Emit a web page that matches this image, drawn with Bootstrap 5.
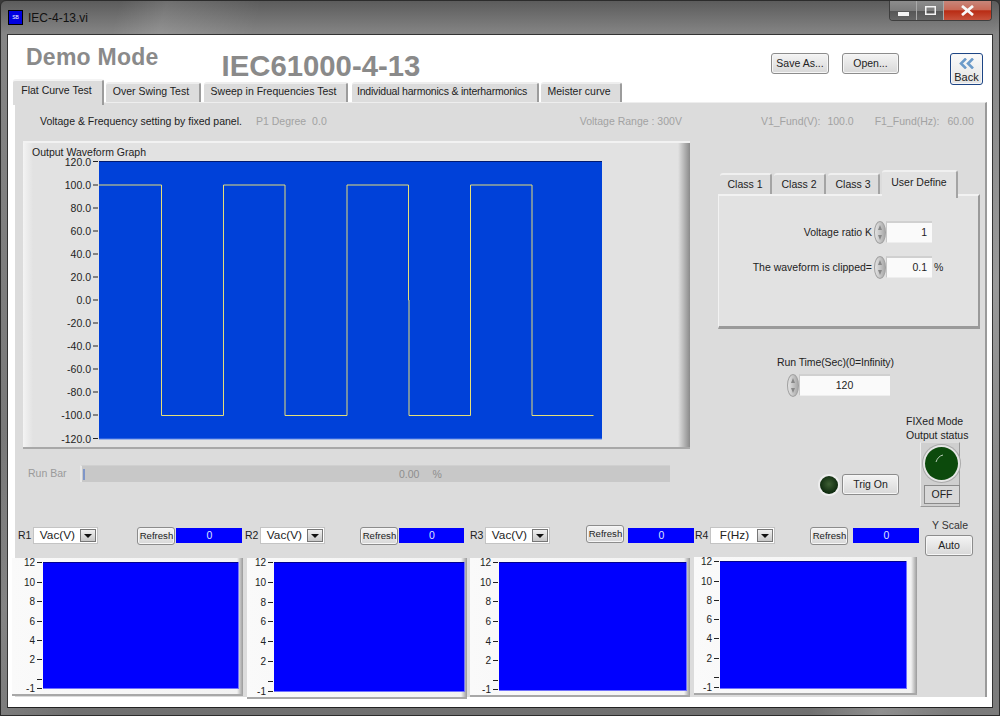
<!DOCTYPE html>
<html lang="en">
<head>
<meta charset="utf-8">
<title>IEC-4-13.vi</title>
<link href="https://cdn.jsdelivr.net/npm/bootstrap@5.3.0/dist/css/bootstrap.min.css" rel="stylesheet">
<style>
html,body{margin:0;height:716px;overflow:hidden;background:#3a3a3a}
body,.btn,svg text{font-family:"Liberation Sans",Arial,sans-serif;font-size:10.5px;color:#222}
svg{display:block}
svg text{fill:#222}
.win{width:1000px;height:716px;border:1px solid #2c2c2c;border-radius:6px 6px 0 0;overflow:hidden;
 background:linear-gradient(105deg,rgba(255,255,255,0) 10%,rgba(255,255,255,.12) 14%,rgba(255,255,255,0) 22%,rgba(255,255,255,0) 84%,rgba(255,255,255,.22) 90%,rgba(255,255,255,.08) 96%),linear-gradient(#5c5c5c,#858585 33px,#707070)}
.titlebar{height:33px;padding-left:7px;flex:none}
.titlebar .ico{width:15px;height:15px;margin-top:9px;background:#0000e0;border:1px solid #000;color:#fff;font-size:5px;line-height:13px;text-align:center;overflow:hidden}
.titlebar .ttl{font-size:12px;margin:10px 0 0 5px;color:#111;line-height:15px}
.caps{width:103px;height:20px;margin-right:7px;border:1px solid #3e3e3e;border-top:0;border-radius:0 0 4px 4px;overflow:hidden}
.caps div{height:100%;display:flex;align-items:center;justify-content:center;background:linear-gradient(#8c8c8c,#7c7c7c 50%,#565656 52%,#666);border-right:1px solid #aaa}
.caps .c1{width:27px;align-items:flex-end;padding-bottom:4px}.caps .c2{width:27px}
.caps .c3{flex:1;border:0;background:linear-gradient(#c8867a,#c86a58 45%,#b92c14 52%,#c8523c)}
.client{margin:0 6px 7px 6px;background:#fff;border:1px solid #333;border-bottom-color:#222;flex:1;min-height:0}
.top{height:44px;flex:none}
.brand{font-weight:700;color:#8a8a8a;margin:0;line-height:1}
.b1{font-size:23px;margin:11px 0 0 18px;letter-spacing:.25px}
.b2{font-size:29.3px;margin:16px 0 0 63px}
.ptabs{position:relative;z-index:2;margin:0 0 0 5px;height:26px;flex-wrap:nowrap}
.tb{color:#222;text-decoration:none}
.ptabs .tb{height:20px;margin-top:3px;margin-right:2px;border:0;border-right:2px solid #9c9c9c;border-top:2px solid #eee;border-radius:3px 3px 0 0;background:#dcdcdc;white-space:nowrap;display:flex;align-items:center;justify-content:center;padding:0 3px 2px 0}
.ptabs .act{height:26px;margin-top:0;border-top-color:#f4f4f4;align-items:flex-start;padding:2px 2px 0 0}
.ptabs .tight{letter-spacing:-.2px;padding-right:5px}
.lv-btn{--bs-btn-padding-x:0;--bs-btn-padding-y:0;--bs-btn-font-size:10.5px;--bs-btn-border-radius:3px;background:linear-gradient(#f4f4f4,#d8d8d8);border:1px solid #8c8c8c;color:#222;line-height:1;box-shadow:inset 0 0 0 1px #f6f6f6}
.btn-save{width:58px;height:21px;margin:18px 13px 0 0;padding-bottom:1px}
.btn-open{width:57px;height:21px;margin:18px 51px 0 0;padding-bottom:1px}
.btn-back{width:33px;height:32px;margin:18px 9px 0 0;border:1px solid #1d4585;background:linear-gradient(#fafafa,#e4e4e4);display:flex;flex-direction:column;align-items:center;justify-content:flex-start;padding-top:4px;gap:3px;font-size:11px}
.panel{height:595px;margin:-3px 0 0 7px;width:972px;background:#dcdcdc;border-right:2px solid #9a9a9a;border-top:1px solid #eee;flex:none;position:relative}
.info{height:38px;flex:none;color:#a2a2a2;white-space:nowrap;padding-top:12px;line-height:13px}
.info .dk{color:#222;margin-left:25px;width:216px}
.main{height:366px;flex:none}
.leftc{width:675px;padding-left:8px;flex:none}
.wgraph{width:667px;height:308px;background:linear-gradient(90deg,#f4f4f4,#e2e2e2 10px,#e2e2e2 655px,#8a8a8a);border-top:2px solid #f2f2f2;border-bottom:2px solid #a8a8a8}
.wgraph svg{margin-top:-2px}
.runbar{margin-top:16px;height:17px;color:#9a9a9a;line-height:17px}
.runbar .lbl{width:57px;padding-left:5px}
.track{width:590px;height:17px;background:#c8c8c8;border-left:2px solid #e8e8e8;border-top:1px solid #d0d0d0;color:#8e8e8e;position:relative}
.track .tick{width:2px;height:11px;margin:3px 0 0 1px;background:#7f96c8}
.track .v{margin-left:314px}.track .p{margin-left:13px}
.rightc{width:262px;margin-left:28px;flex:none}
.ctabs{height:27px;margin:29px 0 0 2px;position:relative;z-index:1;flex-wrap:nowrap}
.ctabs .tb{height:21px;width:52px;margin:3px 2px 0 0;border-top:2px solid #f0f0f0;border-right:2px solid #a4a4a4;background:#dcdcdc;border-radius:3px 3px 0 0;display:flex;align-items:center;justify-content:center}
.ctabs .act{width:76px;height:28px;margin:0;background:#e2e2e2;align-items:flex-start;padding-top:3px}
.cbox{height:135px;margin-top:-3px;background:#e2e2e2;border-top:2px solid #f2f2f2;border-left:1px solid #f2f2f2;border-right:2px solid #9a9a9a;border-bottom:3px solid #9a9a9a;padding-top:25px}
.cbox .r{height:24px;margin-bottom:11px}
.cbox .lab{width:155px;text-align:right;padding-right:2px}
.spin{width:12px;height:23px;flex:none;border-radius:50%;background:linear-gradient(90deg,#e4e4e4,#a8a8a8);border:1px solid #a0a0a0;display:flex;align-items:center;justify-content:center}
.num{height:22px;background:#fafafa;border-top:2px solid #d0d0d0;border-left:1px solid #c8c8c8;border-bottom:1px solid #eee;color:#222;line-height:19px;flex:none}
.n1{width:46px;text-align:right;padding-right:5px}
.rt{margin-top:27px;text-align:center;width:235px}
.rt .t{line-height:13px;margin-bottom:5px;letter-spacing:-.1px}
.rt .f{padding-left:5px}
.n2{width:91px;text-align:center}
.low{margin-top:18px;height:92px;padding-left:102px}
.led{width:18px;height:18px;border-radius:50%;margin:61px 4px 0 0;flex:none;background:radial-gradient(circle at 50% 45%,#3e5f34,#0e2a0e 70%);box-shadow:0 0 0 2px #eee}
.trig{width:57px;height:21px;margin-top:59px;flex:none}
.fx{margin-left:7px;width:70px;line-height:13.5px;color:#222;white-space:nowrap}
.fxbox{width:40px;height:65px;margin-left:14px;background:#cfcfcf;border:1px solid #999;border-left-color:#eee;border-top-color:#ddd;padding:4px 0 0 3px}
.knob{width:33px;height:33px;border-radius:50%;background:#0c4a0c;box-shadow:0 0 0 2px #e6e6e6,0 0 0 3px #aaa;margin-left:1px}
.off{width:36px;height:19px;margin-top:5px;border:1px solid #8a8a8a;background:#d8d8d8;text-align:center;line-height:17px}
.ctrls{margin-left:3px;height:33px}
.grp{flex:none;height:20px;padding-top:2px}
.g1{width:227px}.g2{width:225px}.g3{width:225px}.g4{width:225px}
.sel{width:65px;height:17px;margin-left:2px;background:#fff;border:1px solid #c4c4c4;flex:none;display:flex;align-items:center;line-height:15px}
.sel span{flex:1;text-align:center;font-size:11.8px}
.sel i{width:16px;height:13px;margin-right:1px;background:linear-gradient(#f0f0f0,#c8c8c8);border:1px solid #777;display:flex;align-items:center;justify-content:center}
.sel i:after{content:"";border:4px solid transparent;border-top-color:#111;border-bottom:0}
.rf{width:38px;height:18px;flex:none;font-size:9.6px;--bs-btn-font-size:9.6px}
.blue{height:15px;width:66px;margin-top:1px;background:#0000ff;color:#dfe4ff;text-align:center;line-height:15px;flex:none}
.ys{width:50px;margin:-8px 0 0 5px;text-align:center;color:#333;font-size:10.5px;line-height:13px;padding-top:2px}
.ys .btn{width:48px;height:21px;margin-top:3px;display:block}
.plots{margin-left:-3px;gap:0}
.pl{background:linear-gradient(90deg,#fafafa,#f2f2f2 calc(100% - 6px),#9a9a9a);border-bottom:2px solid #a8a8a8;flex:none}
.pl svg text{font-size:10px}
</style>
</head>
<body>
<div class="win d-flex flex-column">
  <div class="titlebar d-flex">
    <div class="ico">SB</div>
    <div class="ttl">IEC-4-13.vi</div>
    <div class="caps d-flex ms-auto">
      <div class="c1"><svg width="11" height="5"><rect x="0" y="1" width="11" height="4" fill="#f4f4f4"/></svg></div>
      <div class="c2"><svg width="11" height="9"><rect x=".75" y=".75" width="9.5" height="7.5" fill="none" stroke="#f4f4f4" stroke-width="1.5"/></svg></div>
      <div class="c3"><svg width="15" height="11"><path d="M2 1 L13 10 M13 1 L2 10" stroke="#f8f8f8" stroke-width="2.8"/></svg></div>
    </div>
  </div>
  <div class="client d-flex flex-column">
    <div class="top d-flex">
      <h1 class="brand b1">Demo Mode</h1>
      <h1 class="brand b2">IEC61000-4-13</h1>
      <div class="d-flex ms-auto">
        <button class="btn lv-btn btn-save">Save As...</button>
        <button class="btn lv-btn btn-open">Open...</button>
        <button class="btn lv-btn btn-back"><svg width="16" height="11" viewBox="0 0 16 11"><path d="M7 0.5 L2 5.5 L7 10.5 M14 0.5 L9 5.5 L14 10.5" fill="none" stroke="#6b9ac9" stroke-width="2.6"/></svg><span>Back</span></button>
      </div>
    </div>
    <nav class="nav ptabs">
      <a class="tb act" style="width:91px">Flat Curve Test</a>
      <a class="tb" style="width:95px">Over Swing Test</a>
      <a class="tb" style="width:144px;margin-left:1px">Sweep in Frequencies Test</a>
      <a class="tb tight" style="width:187px;margin-left:2px">Individual harmonics &amp; interharmonics</a>
      <a class="tb" style="width:81px">Meister curve</a>
    </nav>
    <div class="panel d-flex flex-column">
      <div class="info d-flex">
        <span class="dk">Voltage &amp; Frequency setting by fixed panel.</span>
        <span>P1 Degree</span><span style="margin-left:3px">&nbsp;0.0</span>
        <span style="margin-left:253px">Voltage Range : 300V</span>
        <span style="margin-left:79px">V1_Fund(V):</span><span style="margin-left:7px">100.0</span>
        <span style="margin-left:21px">F1_Fund(Hz):</span><span style="margin-left:8px">60.00</span>
      </div>
      <div class="main d-flex">
        <div class="leftc">
          <div class="wgraph">
            <svg width="667" height="308" viewBox="0 0 667 308">
              <text x="9" y="15">Output Waveform Graph</text>
              <rect x="76" y="20.5" width="503" height="277.5" fill="#0041d9"/>
              <path d="M76 20.5H579" stroke="#001a70"/>
              <path d="M76 298H579" stroke="#5c86e8"/>
              <path d="M76 44H138.5V274.5H200.5V44H262V274.5H324V44H385.5V159H386V274.5H447.5V44H509V274.5H570.5" fill="none" stroke="#e6df78"/>
              <g stroke="#222" stroke-width="1">
                <path d="M70 20.5h5M70 44h5M70 67h5M70 90h5M70 113h5M70 136h5M70 159h5M70 182h5M70 205h5M70 228h5M70 251h5M70 274h5M70 297.5h5"/>
              </g>
              <g text-anchor="end" style="font-size:10.5px">
                <text x="68" y="24.5">120.0</text><text x="68" y="48">100.0</text><text x="68" y="71">80.0</text><text x="68" y="94">60.0</text><text x="68" y="117">40.0</text><text x="68" y="140">20.0</text><text x="68" y="163">0.0</text><text x="68" y="186">-20.0</text><text x="68" y="209">-40.0</text><text x="68" y="232">-60.0</text><text x="68" y="255">-80.0</text><text x="68" y="278">-100.0</text><text x="68" y="301.5">-120.0</text>
              </g>
            </svg>
          </div>
          <div class="runbar d-flex">
            <div class="lbl">Run Bar</div>
            <div class="track d-flex"><div class="tick"></div><span class="v">0.00</span><span class="p">%</span></div>
          </div>
        </div>
        <div class="rightc">
          <nav class="nav ctabs">
            <a class="tb">Class 1</a><a class="tb">Class 2</a><a class="tb">Class 3</a><a class="tb act">User Define</a>
          </nav>
          <div class="cbox">
            <div class="r d-flex"><div class="lab align-self-center">Voltage ratio K</div><div class="spin"><svg width="6" height="17"><path d="M3 1L1 6H5ZM3 16L1 11H5Z" fill="#888"/></svg></div><div class="num n1">1</div></div>
            <div class="r d-flex"><div class="lab align-self-center">The waveform is clipped=</div><div class="spin"><svg width="6" height="17"><path d="M3 1L1 6H5ZM3 16L1 11H5Z" fill="#888"/></svg></div><div class="num n1">0.1</div><div class="align-self-center" style="margin-left:2px">%</div></div>
          </div>
          <div class="rt">
            <div class="t">Run Time(Sec)(0=Infinity)</div>
            <div class="f d-flex justify-content-center"><div class="spin"><svg width="6" height="17"><path d="M3 1L1 6H5ZM3 16L1 11H5Z" fill="#888"/></svg></div><div class="num n2">120</div></div>
          </div>
          <div class="low d-flex">
            <div class="led"></div>
            <button class="btn lv-btn trig">Trig On</button>
            <div class="fx">
              <div>FIXed Mode<br>Output status</div>
              <div class="fxbox">
                <div class="knob"><svg width="33" height="33"><path d="M11 15Q13 9 18 8" fill="none" stroke="#bcd0bc"/></svg></div>
                <div class="off">OFF</div>
              </div>
            </div>
          </div>
        </div>
      </div>
      <div class="d-flex" style="margin-top:18px">
        <div>
          <div class="ctrls d-flex">
            <div class="grp g1 d-flex"><span class="align-self-center">R1</span><div class="sel"><span>Vac(V)</span><i></i></div><button class="btn lv-btn rf" style="margin-left:39px">Refresh</button><div class="blue" style="margin-left:1px">0</div></div>
            <div class="grp g2 d-flex"><span class="align-self-center">R2</span><div class="sel"><span>Vac(V)</span><i></i></div><button class="btn lv-btn rf" style="margin-left:35px">Refresh</button><div class="blue" style="margin-left:1px;width:65px">0</div></div>
            <div class="grp g3 d-flex"><span class="align-self-center">R3</span><div class="sel"><span>Vac(V)</span><i></i></div><button class="btn lv-btn rf" style="margin-left:36px;margin-top:-2px">Refresh</button><div class="blue" style="margin-left:4px">0</div></div>
            <div class="grp g4 d-flex"><span class="align-self-center">R4</span><div class="sel"><span>F(Hz)</span><i></i></div><button class="btn lv-btn rf" style="margin-left:35px">Refresh</button><div class="blue" style="margin-left:5px">0</div></div>
          </div>
          <div class="plots d-flex align-items-start">
            <div class="pl" style="width:231px">
              <svg width="231" height="136"><rect x="31" y="4" width="196" height="127" fill="#00f"/><path d="M31 4.5H227" stroke="#000090"/><path d="M31 130.5H227M226.5 4V131" stroke="#7070ff"/><path d="M25 4.5h5M25 24.5h5M25 43.5h5M25 63.5h5M25 82.5h5M25 101.5h5M25 121.5h5M25 130.5h5" stroke="#222"/><g text-anchor="end"><text x="23" y="8">12</text><text x="23" y="28">10</text><text x="23" y="47">8</text><text x="23" y="67">6</text><text x="23" y="86">4</text><text x="23" y="105">2</text><text x="23" y="134">-1</text></g></svg>
            </div>
            <div class="pl" style="width:220px;margin-left:4px">
              <svg width="220" height="139"><rect x="27" y="4" width="191" height="130" fill="#00f"/><path d="M27 4.5H218" stroke="#000090"/><path d="M27 133.5H218M217.5 4V134" stroke="#7070ff"/><path d="M21 4.5h5M21 24.5h5M21 44.5h5M21 63.5h5M21 83.5h5M21 103.5h5M21 123.5h5M21 133.5h5" stroke="#222"/><g text-anchor="end"><text x="19" y="8">12</text><text x="19" y="28">10</text><text x="19" y="48">8</text><text x="19" y="67">6</text><text x="19" y="87">4</text><text x="19" y="107">2</text><text x="19" y="137">-1</text></g></svg>
            </div>
            <div class="pl" style="width:220px;margin-left:3px">
              <svg width="220" height="137"><rect x="29" y="4" width="188" height="129" fill="#00f"/><path d="M29 4.5H217" stroke="#000090"/><path d="M29 132.5H217M216.5 4V133" stroke="#7070ff"/><path d="M23 4.5h5M23 24.5h5M23 43.5h5M23 63.5h5M23 83.5h5M23 102.5h5M23 122.5h5M23 131.5h5" stroke="#222"/><g text-anchor="end"><text x="21" y="8">12</text><text x="21" y="28">10</text><text x="21" y="47">8</text><text x="21" y="67">6</text><text x="21" y="87">4</text><text x="21" y="106">2</text><text x="21" y="135">-1</text></g></svg>
            </div>
            <div class="pl" style="width:223px;margin:-1px 0 0 4px">
              <svg width="223" height="136"><rect x="26" y="4" width="187" height="128" fill="#00f"/><path d="M26 4.5H213" stroke="#000090"/><path d="M26 131.5H213M212.5 4V132" stroke="#7070ff"/><path d="M20 4.5h5M20 24.5h5M20 43.5h5M20 62.5h5M20 81.5h5M20 101.5h5M20 120.5h5M20 130.5h5" stroke="#222"/><g text-anchor="end"><text x="18" y="8">12</text><text x="18" y="28">10</text><text x="18" y="47">8</text><text x="18" y="66">6</text><text x="18" y="85">4</text><text x="18" y="105">2</text><text x="18" y="134">-1</text></g></svg>
            </div>
          </div>
        </div>
        <div class="ys">Y Scale<button class="btn lv-btn">Auto</button></div>
      </div>
    </div>
  </div>
</div>
<script src="https://cdn.jsdelivr.net/npm/bootstrap@5.3.0/dist/js/bootstrap.bundle.min.js"></script>
</body>
</html>
